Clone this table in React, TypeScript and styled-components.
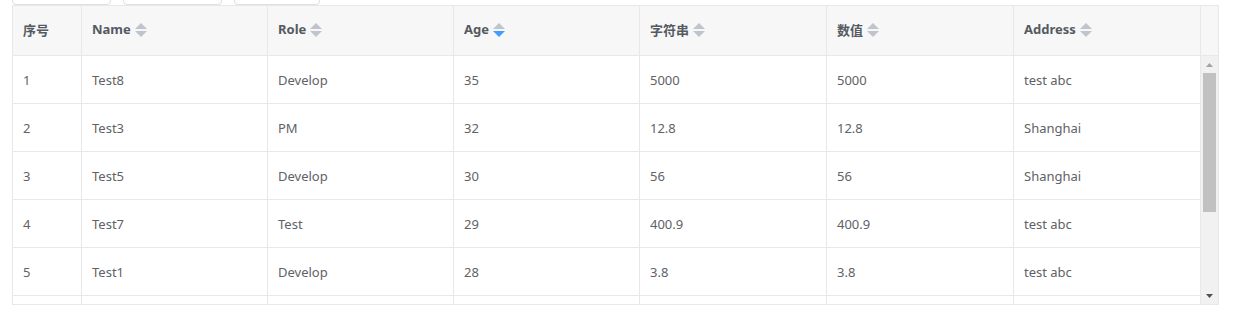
import React from "react";
import styled, { createGlobalStyle } from "styled-components";

const Global = createGlobalStyle`
  html, body { margin: 0; padding: 0; background: #fff; }
  body { font-family: "Noto Sans", "Noto Sans CJK SC", sans-serif; overflow: hidden; }
`;

const Page = styled.div`
  padding-left: 12px;
  width: 1207px;
`;

const Toolbar = styled.div`
  display: flex;
  gap: 12px;
  margin-top: -27px;
`;

const ToolButton = styled.div<{ $w: number }>`
  box-sizing: border-box;
  width: ${(p) => p.$w}px;
  height: 32px;
  border: 1px solid #dcdfe6;
  border-radius: 4px;
  background: #fff;
`;

const TableBox = styled.div`
  border: 1px solid #e8e8e8;
  height: 298px;
  overflow: hidden;
  display: flex;
  flex-direction: column;
  color: #606266;
  font-size: 13px;
`;

const COLS = "69px 186px 186px 186px 187px 187px 187px 17px";

const HeadRow = styled.div`
  display: grid;
  grid-template-columns: ${COLS};
  background: #f7f7f7;
`;

const HeadCell = styled.div<{ $last?: boolean }>`
  box-sizing: border-box;
  height: 50px;
  border-bottom: 1px solid #e8e8e8;
  border-right: ${(p) => (p.$last ? "none" : "1px solid #e8e8e8")};
  padding: 0 0 3px 10px;
  display: flex;
  align-items: center;
  gap: 4px;
  font-weight: 700;
  color: #555a62;
`;

const IconWrap = styled.span`
  display: flex;
  padding-top: 2px;
`;

const BodyArea = styled.div`
  display: flex;
  flex: 1;
  min-height: 0;
`;

const Rows = styled.div`
  width: 1188px;
  overflow: hidden;
`;

const Row = styled.div`
  display: grid;
  grid-template-columns: 69px 186px 186px 186px 187px 187px 187px;
`;

const Cell = styled.div`
  box-sizing: border-box;
  height: 48px;
  border-bottom: 1px solid #e8e8e8;
  border-right: 1px solid #e8e8e8;
  padding-left: 10px;
  display: flex;
  align-items: center;
`;

const ScrollTrack = styled.div`
  width: 17px;
  background: #f1f1f1;
  display: flex;
  flex-direction: column;
  align-items: center;
`;

const ArrowBox = styled.div`
  height: 17px;
  width: 17px;
  display: flex;
  align-items: center;
  justify-content: center;
`;

const Thumb = styled.div`
  width: 13px;
  height: 139px;
  background: #c1c1c1;
`;

const Spacer = styled.div`
  flex: 1;
`;

type Dir = "none" | "desc";

const SortIcon = ({ dir }: { dir: Dir }) => (
  <svg width="12" height="14" viewBox="0 0 12 14">
    <polygon points="6,0 12,6 0,6" fill="#c0c4cc" />
    <polygon points="0,8 12,8 6,14" fill={dir === "desc" ? "#409eff" : "#c0c4cc"} />
  </svg>
);

const Arrow = ({ up }: { up?: boolean }) => (
  <svg width="7" height="4" viewBox="0 0 7 4">
    {up ? (
      <polygon points="3.5,0 7,4 0,4" fill="#a3a3a3" />
    ) : (
      <polygon points="0,0 7,0 3.5,4" fill="#505050" />
    )}
  </svg>
);

const headers: { label: string; sort: boolean; dir: Dir }[] = [
  { label: "序号", sort: false, dir: "none" },
  { label: "Name", sort: true, dir: "none" },
  { label: "Role", sort: true, dir: "none" },
  { label: "Age", sort: true, dir: "desc" },
  { label: "字符串", sort: true, dir: "none" },
  { label: "数值", sort: true, dir: "none" },
  { label: "Address", sort: true, dir: "none" },
];

const data = [
  ["1", "Test8", "Develop", "35", "5000", "5000", "test abc"],
  ["2", "Test3", "PM", "32", "12.8", "12.8", "Shanghai"],
  ["3", "Test5", "Develop", "30", "56", "56", "Shanghai"],
  ["4", "Test7", "Test", "29", "400.9", "400.9", "test abc"],
  ["5", "Test1", "Develop", "28", "3.8", "3.8", "test abc"],
  ["", "", "", "", "", "", ""],
];

export default function App() {
  return (
    <>
      <Global />
      <Page>
        <Toolbar>
          <ToolButton $w={99} />
          <ToolButton $w={99} />
          <ToolButton $w={86} />
        </Toolbar>
        <TableBox>
          <HeadRow>
            {headers.map((h) => (
              <HeadCell key={h.label}>
                {h.label}
                {h.sort && (
                  <IconWrap>
                    <SortIcon dir={h.dir} />
                  </IconWrap>
                )}
              </HeadCell>
            ))}
            <HeadCell $last />
          </HeadRow>
          <BodyArea>
            <Rows>
              {data.map((r, ri) => (
                <Row key={ri}>
                  {r.map((c, i) => (
                    <Cell key={i}>{c}</Cell>
                  ))}
                </Row>
              ))}
            </Rows>
            <ScrollTrack>
              <ArrowBox>
                <Arrow up />
              </ArrowBox>
              <Thumb />
              <Spacer />
              <ArrowBox>
                <Arrow />
              </ArrowBox>
            </ScrollTrack>
          </BodyArea>
        </TableBox>
      </Page>
    </>
  );
}
